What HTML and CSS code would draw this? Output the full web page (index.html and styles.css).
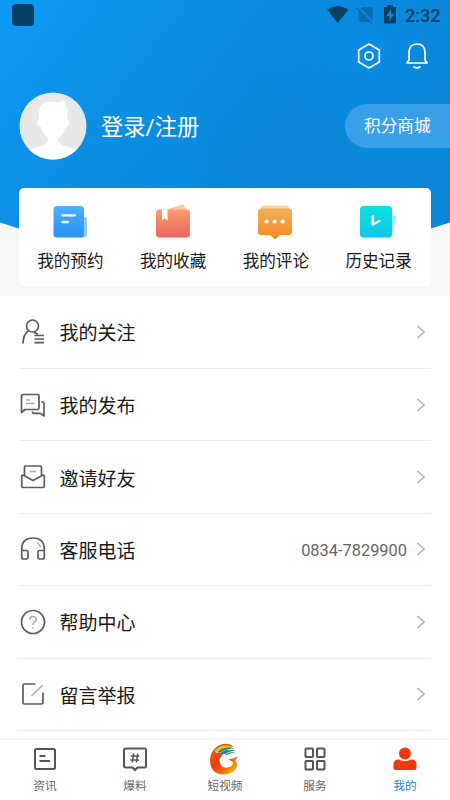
FILE: index.html
```html
<!DOCTYPE html>
<html lang="zh-CN">
<head>
<meta charset="utf-8">
<meta name="viewport" content="width=device-width, initial-scale=1">
<title>我的</title>
<link rel="stylesheet" href="styles.css">
</head>
<body>
<div class="app">
  <header class="hero">
    <svg class="hero-bg" viewBox="0 0 450 296" aria-hidden="true">
      <defs>
        <linearGradient id="sky" gradientUnits="userSpaceOnUse" x1="0" y1="0" x2="240" y2="190"><stop offset="0" stop-color="#0d9bf6"/><stop offset=".5" stop-color="#0b8fe4"/><stop offset="1" stop-color="#0b88d9"/></linearGradient>
        <radialGradient id="glow"><stop offset="0" stop-color="#078de8" stop-opacity=".8"/><stop offset="1" stop-color="#078de8" stop-opacity="0"/></radialGradient>
      </defs>
      <path d="M0 0H450V222.500Q225 300 0 222.500Z" fill="url(#sky)"/>
      <ellipse cx="355" cy="50" rx="100" ry="70" fill="url(#glow)"/>
      <circle cx="172" cy="180" r="48" fill="url(#glow)"/>
    </svg>
    <div class="status">
      <span class="status-app"></span>
      <svg class="status-icons" viewBox="0 0 70 20" width="70" height="20" aria-hidden="true">
        <path d="M0 4.500Q10.800-2.500 21.600 4.500L10.800 18Z" fill="#064164"/>
        <path d="M35 2H44Q46 2 46 4V17H34Q31.500 17 31.500 15V5.500Z" fill="#0a6caf"/>
        <path d="M31 2L46 17" stroke="#0b88dc" stroke-width="2"/>
        <path d="M29.500 3L45 18.500" stroke="#0a69a8" stroke-width="1.300"/>
        <path d="M60 0H66V2H69V18.500H57V2H60Z" fill="#064164"/>
        <path d="M64 4L59.500 11H62.500V16L67 9H64Z" fill="#078ce5"/>
      </svg>
      <span class="clock">2:32</span>
    </div>
    <div class="actions">
      <svg viewBox="0 0 24 28" width="24" height="28" fill="none" stroke="#fff" stroke-width="1.700" aria-hidden="true"><path d="M12 2L22.300 8V20L12 26L1.700 20V8Z" stroke-linejoin="round"/><circle cx="12" cy="14" r="4"/></svg>
      <svg viewBox="0 0 24 28" width="24" height="28" fill="none" stroke="#fff" stroke-width="1.700" stroke-linecap="round" stroke-linejoin="round" aria-hidden="true"><path d="M4 18V11Q4 2 12 2T20 11V18L22 21H2Z"/><path d="M9 25Q12 26.700 15 25"/></svg>
    </div>
    <div class="profile">
      <svg class="avatar" viewBox="0 0 68 68" width="68" height="68" aria-hidden="true">
        <defs><clipPath id="round"><circle cx="34" cy="34" r="33.500"/></clipPath></defs>
        <circle cx="34" cy="34" r="33.500" fill="#e8e8e8"/>
        <path clip-path="url(#round)" d="M0 68Q6 59 18 55Q27 53 29 49V46Q23 41 22 35Q18 34 18 30Q18 28 20 27Q19 15 24 12Q27 9 37 10Q44 10 45 8Q47 11 46 13Q50 17 48 27Q51 28 50 31Q49 35 46 36Q45 42 39 47V49Q41 53 49 55Q61 58 68 68Z" fill="#fff"/>
      </svg>
      <span class="login">登录/注册</span>
      <span class="mall">积分商城</span>
    </div>
    <nav class="shortcuts">
      <div class="shortcut">
        <svg viewBox="0 0 36 36" width="36" height="36" aria-hidden="true"><defs><linearGradient id="blue" x2="0" y2="1"><stop stop-color="#4cb0fb"/><stop offset="1" stop-color="#2b91f8"/></linearGradient></defs><path d="M30 13H33Q35 13 35 16V31Q35 33.500 32 33.500H28Z" fill="#8fcbfd"/><rect x="1.500" y="2" width="30.500" height="31.500" rx="3.500" fill="url(#blue)"/><path d="M10.500 11.300H23M10.500 18H16" stroke="#fff" stroke-width="2.300" stroke-linecap="round"/></svg>
        <span>我的预约</span>
      </div>
      <div class="shortcut">
        <svg viewBox="0 0 36 36" width="36" height="36" aria-hidden="true"><defs><linearGradient id="red" x2="0" y2="1"><stop stop-color="#fa9e69"/><stop offset="1" stop-color="#ed6560"/></linearGradient></defs><path d="M10 6L27 .5Q29 0 29.500 2L31 9H9Z" fill="#fdc9a8"/><rect x="1" y="5.500" width="34" height="28" rx="3.500" fill="url(#red)"/><path d="M7 5.500H12.500V16.500L9.750 14.200L7 16.500Z" fill="#fff"/></svg>
        <span>我的收藏</span>
      </div>
      <div class="shortcut">
        <svg viewBox="0 0 36 36" width="36" height="36" aria-hidden="true"><defs><linearGradient id="orange" x2="0" y2="1"><stop stop-color="#f3af57"/><stop offset="1" stop-color="#f78724"/></linearGradient></defs><rect x="4" y="1.500" width="28" height="10" rx="3" fill="#fbd2a0"/><path d="M4.500 4.500H31.500Q35 4.500 35 8V28Q35 31 31.500 31H23L18 35.500L13 31H4.500Q1 31 1 28V8Q1 4.500 4.500 4.500Z" fill="url(#orange)"/><g fill="#fff"><circle cx="9.500" cy="17.500" r="2.100"/><circle cx="17.500" cy="17.500" r="2.100"/><circle cx="25.500" cy="17.500" r="2.100"/></g></svg>
        <span>我的评论</span>
      </div>
      <div class="shortcut">
        <svg viewBox="0 0 36 36" width="36" height="36" aria-hidden="true"><defs><linearGradient id="cyan" x2="0" y2="1"><stop stop-color="#0de0e2"/><stop offset="1" stop-color="#12c5eb"/></linearGradient></defs><path d="M31 11L35.500 12Q36.500 13 36 14.500L32 28H28Z" fill="#90edf0"/><rect x="0" y="2" width="32" height="31.500" rx="3.500" fill="url(#cyan)"/><path d="M12.800 12.500V20.500L19.300 17" fill="none" stroke="#fff" stroke-width="2.500" stroke-linecap="round" stroke-linejoin="round"/></svg>
        <span>历史记录</span>
      </div>
    </nav>
  </header>

  <main class="list">
    <div class="row">
      <svg class="row-icon" viewBox="0 0 28 28" aria-hidden="true"><circle cx="13.500" cy="8" r="6"/><path d="M9.500 12.500Q4 17 4 25.500M15 14.500Q17 15.500 19 16M15.500 17.500H25M15.500 21H25M15.500 24.700H25"/></svg>
      <span class="row-label">我的关注</span><svg class="chevron" viewBox="0 0 10 16" aria-hidden="true"><path d="M1.500 2L8 8L1.500 14"/></svg>
    </div>
    <div class="row">
      <svg class="row-icon" viewBox="0 0 28 28" aria-hidden="true"><path d="M2.500 21.500V5Q2.500 3.500 4 3.500H18.500Q20 3.500 20 5V17Q20 18.500 18.500 18.500H6Z"/><path d="M22 11H23.500Q25 11 25 12.500V25L21.500 22.300H15Q13.500 22.300 13.500 20.500"/><path class="faint" d="M7 9H11M7 12.500H15.500"/></svg>
      <span class="row-label">我的发布</span><svg class="chevron" viewBox="0 0 10 16" aria-hidden="true"><path d="M1.500 2L8 8L1.500 14"/></svg>
    </div>
    <div class="row">
      <svg class="row-icon" viewBox="0 0 28 28" aria-hidden="true"><path d="M5.500 13V4.500Q5.500 3 7 3H21Q22.500 3 22.500 4.500V13M4 12Q2.700 12 2.700 13.500V23Q2.700 24.500 4.200 24.500H23.800Q25.300 24.500 25.300 23V13.500Q25.300 12 24 12L14 17.500Z"/><path class="faint" d="M10.500 8.500H17"/></svg>
      <span class="row-label">邀请好友</span><svg class="chevron" viewBox="0 0 10 16" aria-hidden="true"><path d="M1.500 2L8 8L1.500 14"/></svg>
    </div>
    <div class="row">
      <svg class="row-icon" viewBox="0 0 28 28" aria-hidden="true"><path d="M2.700 22V14.500Q2.700 3 14 3T25.300 14.500V22Q25.300 24 23.500 24H20.500Q19 24 19 22.500V17Q19 15.500 20.500 15.500H25M3 15.500H7.500Q9 15.500 9 17V22.500Q9 24 7.500 24H4.500Q2.700 24 2.700 22"/><path class="faint" d="M18.500 8Q21 9.500 21.500 12"/></svg>
      <span class="row-label">客服电话</span><span class="phone">0834-7829900</span><svg class="chevron" viewBox="0 0 10 16" aria-hidden="true"><path d="M1.500 2L8 8L1.500 14"/></svg>
    </div>
    <div class="row">
      <svg class="row-icon" viewBox="0 0 28 28" aria-hidden="true"><circle cx="14" cy="14" r="11.500"/><path class="faint" d="M10.700 11.500Q10.700 8.500 14 8.500T17.300 11.300Q17.300 13 15.500 14Q14 15 14 17M14 19V20.500"/></svg>
      <span class="row-label">帮助中心</span><svg class="chevron" viewBox="0 0 10 16" aria-hidden="true"><path d="M1.500 2L8 8L1.500 14"/></svg>
    </div>
    <div class="row">
      <svg class="row-icon" viewBox="0 0 28 28" aria-hidden="true"><path d="M16.500 4H5.500Q4 4 4 5.500V22.500Q4 24 5.500 24H22.500Q24 24 24 22.500V12.500"/><path class="faint" d="M12.500 16L23.500 5.500"/></svg>
      <span class="row-label">留言举报</span><svg class="chevron" viewBox="0 0 10 16" aria-hidden="true"><path d="M1.500 2L8 8L1.500 14"/></svg>
    </div>
  </main>

  <nav class="tabs">
    <div class="tab">
      <svg viewBox="0 0 32 32" aria-hidden="true"><rect x="6" y="6" width="20" height="20" rx="1.500"/><path d="M10.500 13H16.500M10.500 18H21"/></svg><span>资讯</span>
    </div>
    <div class="tab">
      <svg viewBox="0 0 32 32" aria-hidden="true"><path d="M6.500 5.500H25.500Q27 5.500 27 7V23Q27 24.500 25.500 24.500H18.500L16 27L13.500 24.500H6.500Q5 24.500 5 23V7Q5 5.500 6.500 5.500Z"/><path stroke-width="1.500" d="M14.700 10.500L13.300 19.500M18.700 10.500L17.300 19.500M11.700 13H20.500M11.300 17H20"/></svg><span>爆料</span>
    </div>
    <div class="tab">
      <svg viewBox="0 0 32 32" aria-hidden="true"><defs><linearGradient id="fire" gradientUnits="userSpaceOnUse" x1="4" y1="8" x2="25" y2="30"><stop stop-color="#f0540f"/><stop offset=".4" stop-color="#ec3c0e"/><stop offset=".7" stop-color="#f36c0a"/><stop offset="1" stop-color="#fbbb08"/></linearGradient></defs><g stroke="none"><path d="M24 3Q15-2 7 4.500Q.5 10 1 18Q2 31 14 31.500Q25 31.500 28 23Q28.500 20 26.300 18Q26.300 16 29.500 13.500Q26 14 24.500 15.500Q22 15 19.500 16.500Q21 17.500 23.500 18.500Q25 23 19 24.500Q12 25.500 10.700 19Q10 13.500 16 10Z" fill="url(#fire)"/><path d="M5.500 8Q13-1 24.500 4Q14 3 7.500 10Z" fill="#fbbb22"/><path d="M6.800 10Q13 2 26 5.500Q17 6 12 9.500Z" fill="#fff"/><path d="M8 9.500Q14 2.500 25.500 5.500Q17 5.500 11.500 9.500Z" fill="#17935f"/><path d="M11.500 10Q18 5.500 27 7.500Q20 8 16 11Z" fill="#1678bf"/><path d="M16.500 11Q21 8.200 28 9.500Q22 9.500 17.500 12.500Z" fill="#55ad55"/></g></svg><span>短视频</span>
    </div>
    <div class="tab">
      <svg viewBox="0 0 32 32" aria-hidden="true"><rect x="6.500" y="5.500" width="7.500" height="8.500" rx=".7"/><rect x="18" y="5.500" width="7.500" height="8.500" rx=".7"/><rect x="6.500" y="18" width="7.500" height="8.500" rx=".7"/><rect x="18" y="18" width="7.500" height="8.500" rx=".7"/></svg><span>服务</span>
    </div>
    <div class="tab tab-active">
      <svg viewBox="0 0 32 32" aria-hidden="true"><g fill="#ed390c" stroke="none"><circle cx="16" cy="10.500" r="6"/><path d="M8 16.500H10Q16 20 22 16.500H24Q27.500 17.500 27.500 21V25Q27.500 27 25.500 27H6.500Q4.500 27 4.500 25V21Q4.500 17.500 8 16.500Z"/></g></svg><span>我的</span>
    </div>
  </nav>
</div>
</body>
</html>
```
FILE: styles.css
```css
* { box-sizing: border-box; }
body {
  margin: 0;
  font-family: Roboto, "Noto Sans CJK SC", sans-serif;
  color: #181818;
  background: #fff;
}
svg { display: block; flex: none; overflow: visible; }
.app {
  display: flex;
  flex-direction: column;
  width: 450px;
  height: 800px;
  overflow: hidden;
}
.hero {
  position: relative;
  isolation: isolate;
  flex: none;
  height: 296px;
  background: #f7f7f7;
}
.hero-bg {
  position: absolute;
  inset: 0;
  z-index: -1;
  width: 450px;
  height: 296px;
}
.status {
  display: flex;
  align-items: center;
  height: 30px;
  padding: 0 9px 0 12px;
}
.status-app {
  width: 22px;
  height: 22px;
  border-radius: 4px;
  background: #064164;
}
.status-icons { margin: 0 8px 0 auto; }
.clock {
  width: 36px;
  color: #064164;
  font-size: 18px;
  font-weight: 500;
  line-height: 30px;
  padding-top: 2px;
  white-space: nowrap;
}
.actions {
  display: flex;
  justify-content: flex-end;
  gap: 24px;
  padding: 11.500px 21px 0 0;
  height: 61.500px;
}
.profile {
  display: flex;
  align-items: center;
  height: 68px;
  padding-left: 19px;
}
.login {
  margin-left: 14px;
  padding-top: 3px;
  color: #fff;
  font-size: 22.300px;
  line-height: 32px;
}
.mall {
  width: 105px;
  height: 44px;
  margin-left: auto;
  padding-left: 19px;
  border-radius: 22px 0 0 22px;
  background: #38a0e6;
  color: #fff;
  font-size: 16.700px;
  line-height: 46px;
}
.shortcuts {
  display: grid;
  grid-template-columns: repeat(4, 1fr);
  height: 98px;
  margin: 28.500px 19px 0;
  padding: 16px 1px 0 0;
  border-radius: 5px;
  background: #fff;
}
.shortcut {
  display: flex;
  flex-direction: column;
  align-items: center;
  gap: 9.500px;
  font-size: 16.600px;
  line-height: 24px;
}
.shortcut svg { margin-left: -1px; }
.list {
  flex: 1;
  min-height: 0;
  overflow: hidden;
  padding: 0 19px;
}
.row {
  display: flex;
  align-items: center;
  height: 72.450px;
  border-bottom: 1px solid #ededed;
}
.row:first-child { height: 72.900px; }
.row-icon {
  width: 28px;
  height: 28px;
  fill: none;
  stroke: #5c5c5c;
  stroke-width: 1.700;
  stroke-linejoin: round;
}
.row-icon .faint { stroke: #aaa; stroke-width: 1.500; }
.row-label {
  flex: 1;
  margin-left: 12.500px;
  padding-top: 5px;
  font-size: 19px;
  line-height: 28px;
}
.phone {
  margin-right: 9px;
  padding-top: 3px;
  color: #666;
  font-size: 16.400px;
}
.chevron {
  width: 10px;
  height: 16px;
  margin-right: 5px;
  fill: none;
  stroke: #b5b5b5;
  stroke-width: 1.700;
}
.tabs {
  display: grid;
  grid-template-columns: repeat(5, 1fr);
  flex: none;
  height: 62px;
  padding-top: 5px;
  border-top: 2px solid #f6f6f6;
  background: #fff;
}
.tab {
  display: flex;
  flex-direction: column;
  align-items: center;
  gap: 2px;
  color: #666;
  font-size: 11.700px;
  line-height: 18px;
}
.tab svg {
  width: 32px;
  height: 32px;
  margin-top: -2px;
  fill: none;
  stroke: #555;
  stroke-width: 2;
}
.tab-active { color: #1388d5; }
```
